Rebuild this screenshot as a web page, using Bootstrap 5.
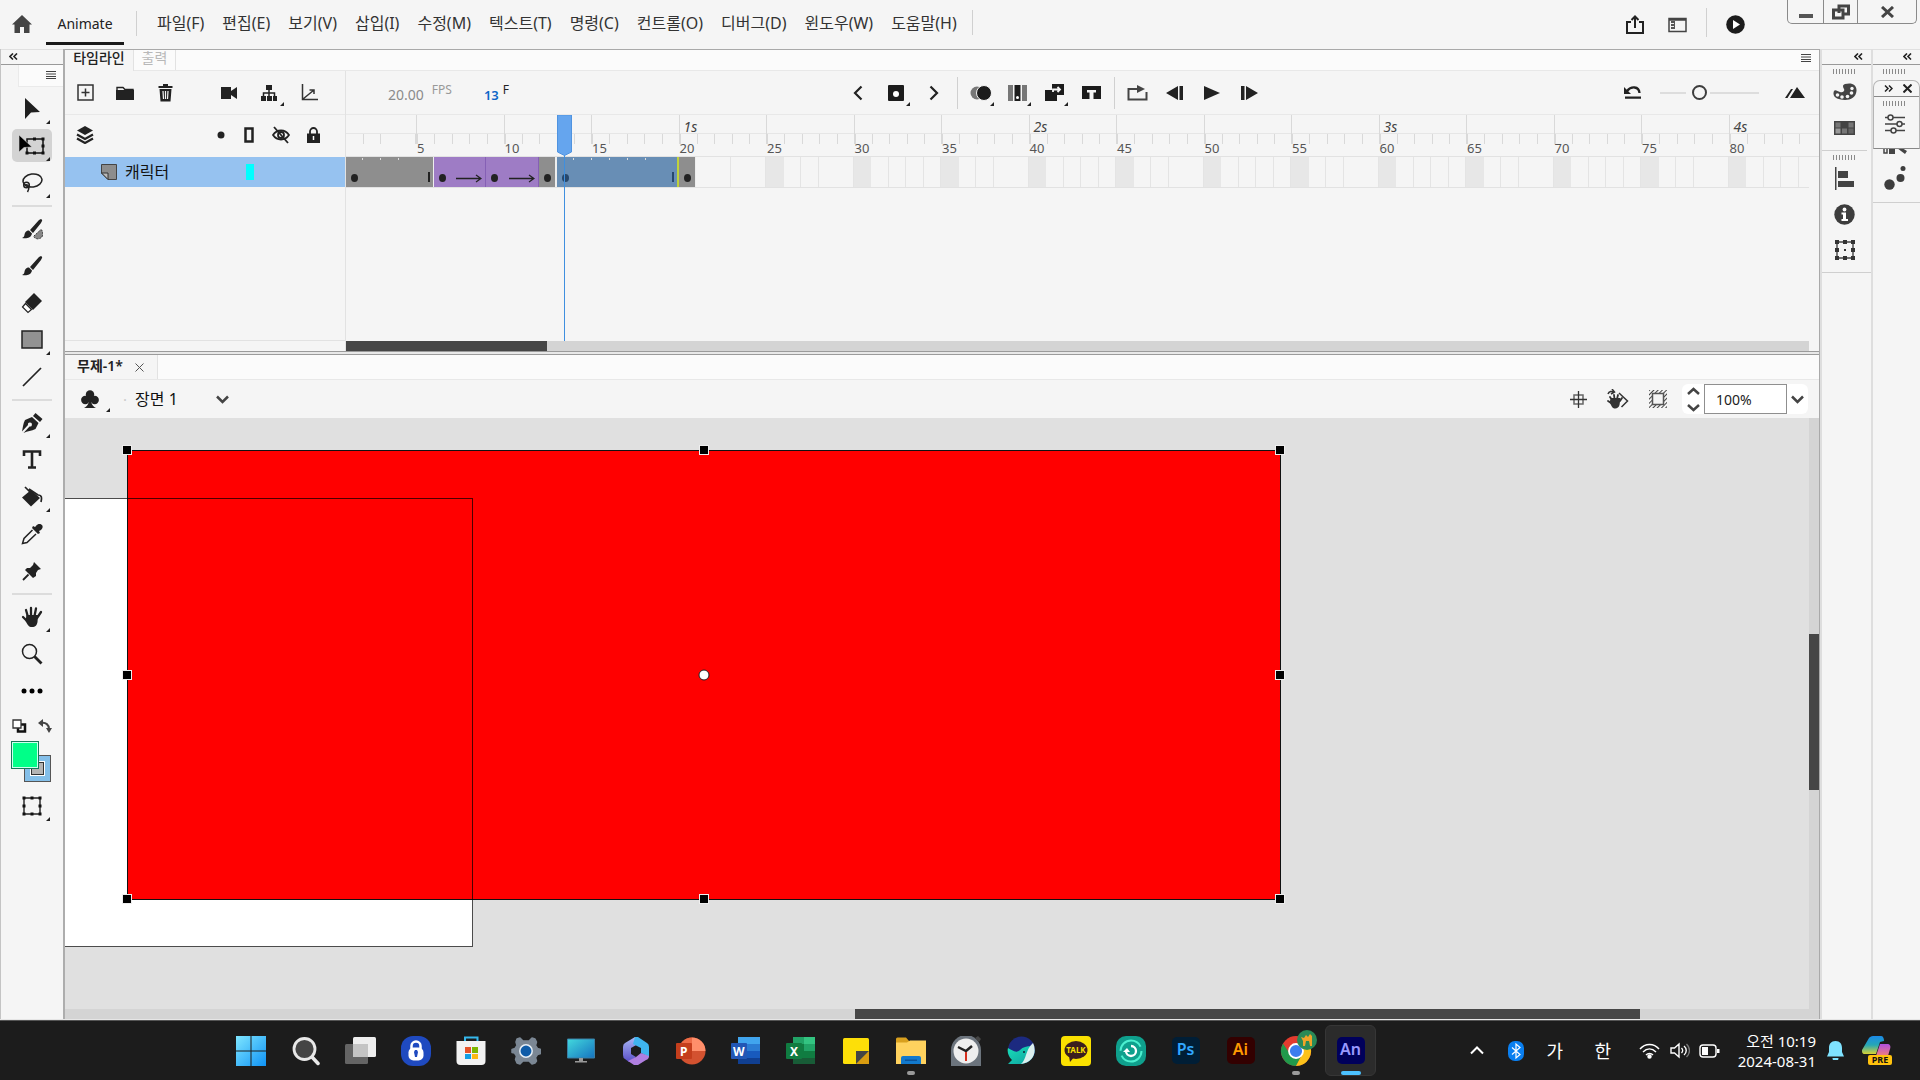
<!DOCTYPE html>
<html lang="ko">
<head>
<meta charset="utf-8">
<meta name="viewport" content="width=device-width, initial-scale=1">
<title>Animate</title>
<link href="https://cdn.jsdelivr.net/npm/bootstrap@5.3.0/dist/css/bootstrap.min.css" rel="stylesheet">
<style>
:root{--ink:#222;--panel:#f5f5f5;--line:#e2e2e2;--edge:#a9a9a9;--dark:#464646}
body{font-family:"Noto Sans","Noto Sans CJK KR",sans-serif;font-size:15px;line-height:20px;color:#333;background:var(--panel)}
button{color:var(--ink)}
svg{display:block}
.ib{border:0;background:none;padding:0;position:relative;display:flex;align-items:center;justify-content:center;flex:none}
.more::after{content:"";position:absolute;right:5px;bottom:50%;margin-bottom:-13px;border-left:4px solid transparent;border-bottom:4px solid var(--ink)}
/* application bar */
.appbar{height:49px;flex:none}
.home{width:46px;height:49px;padding-right:2px}
.brandtab{width:78px;height:45px;border-bottom:3px solid #1a1a1a;color:#222;text-decoration:none;font-size:14px;padding-top:6px}
.vsep{width:1px;height:25px;background:#d0d0d0;flex:none}
.menus{gap:18px;padding:0 15px 0 20px;list-style:none;margin:0;font-size:16px}
.menus a{color:#333;text-decoration:none;white-space:nowrap}
.winctl{height:24px;border:1px solid #8a8a8a;border-top:0;border-radius:0 0 5px 5px;margin-right:3px}
.winctl .ib{height:23px}
.winctl .ib+.ib{border-left:1px solid #8a8a8a}
/* tools */
.tools{width:65px;border-left:1px solid #c4c4c4;border-right:2px solid #adadad;flex:none}
.collapse-bar{height:16px;border-bottom:1px solid #999;border-top:1px solid #e0e0e0;padding-bottom:1px;flex:none}
.tools-head{height:22px;margin-left:17px;background:#fbfbfb;border:1px solid #eaeaea;border-top:0;border-right:0;padding:0 7px 2px 0}
.toolcol{padding-top:3px}
.tool{width:40px;height:37px}
.tool.on::before{content:"";position:absolute;inset:2px 0;background:#d3d3d3;border-radius:5px}
.tool svg{position:relative}
.tool.more::after{right:2px;margin-bottom:-15px}
.tsep{width:40px;height:2px;margin:4px 0 3px;background:#dcdcdc}
.colorops{width:40px;height:32px;padding-top:2px}
.swatches{width:42px;height:42px;position:relative}
.sw-fill,.sw-stroke{position:absolute;border:1px solid #555;padding:0}
.sw-fill{left:0;top:0;width:28px;height:28px;background:#00ff88;box-shadow:inset 0 0 0 1px #cfe;border-color:#19765a}
.sw-stroke{left:13px;top:14px;width:27px;height:27px;background:#84bfe9;display:flex;align-items:center;justify-content:center}
.sw-stroke i{width:13px;height:13px;background:#b4b4b4;border:1px solid #333;outline:1px solid #fff}
/* timeline */
.center{border-top:1px solid var(--edge);min-width:0}
.tabs-row{background:#fbfbfb;border-bottom:1px solid #e8e8e8;flex:none}
.tab-on{background:var(--panel);border:0;border-right:1px solid var(--line);color:#222;padding:0}
.tl-tabs{height:21px;font-size:14px}
.tl-tabs .tab-on{width:69px;height:21px;font-weight:500;line-height:15px;padding-bottom:6px}
.tab-off{width:42px;height:20px;border:0;border-right:1px solid var(--line);background:none;color:#b8b8b8;padding:0 0 5px;line-height:15px}
.layers{width:281px;border-right:1px solid var(--line);flex:none}
.tl-bar{height:44px;border-bottom:1px solid #e8e8e8;flex:none}
.tl-head{height:42px;flex:none;padding-bottom:2px}
.b40{width:40px;height:40px}.b38{width:38px;height:40px}.b37{width:37px;height:40px}.b32{width:32px;height:40px}
.layer-row{height:30px;background:#96c2f0;color:#111;padding-left:36px;font-size:16px}
.layer-name{width:121px;padding-left:8px}
.outline-chip{width:8px;height:16px;background:#0ff;border:0;padding:0}
.layer-foot{height:11px;border-top:1px solid var(--line)}
.fpsnum{color:#8b8b8b;font-size:14px;padding-top:5px}
.tiny{font-size:12px;line-height:16px;padding-bottom:5px}
.curframe{color:#0d66c8;font-weight:600;font-size:13px;padding-top:5px}
.zoomslide{appearance:none;width:99px;height:18px;background:linear-gradient(#ddd,#ddd) 0 8px/26px 2px no-repeat,linear-gradient(#ddd,#ddd) 50px 8px/49px 2px no-repeat;margin:0}
.zoomslide::-webkit-slider-thumb{appearance:none;width:15px;height:15px;border:2px solid #3d3d3d;border-radius:50%;background:var(--panel)}
.frames{position:relative;overflow:hidden;min-height:0}
.ruler{height:42px;border-bottom:1px solid var(--line);position:relative;overflow:hidden}
.ruler::before{content:"";position:absolute;left:0;right:0;top:18px;height:1px;background:#e6e6e6}
.lead4{width:70px;flex:none}
.block10{width:175px;flex:none}
.block10>*{flex:1 1 0;min-width:0}
.ticks{height:41px;position:relative}
.ticks::before{content:"";position:absolute;left:0;right:0;top:19px;height:10px;background:repeating-linear-gradient(90deg,#d9d9d9 0 1px,transparent 1px 20%)}
.lead4.ticks::before{background:repeating-linear-gradient(90deg,transparent 0 24%,#d9d9d9 24% 25%)}
.five{border-left:1px solid transparent}
.five::after{content:"";position:absolute;left:-1px;top:0;width:1px;height:29px;background:#d9d9d9}
.sec{position:absolute;left:4px;top:3px;line-height:18px;font-size:14px;font-style:italic;color:#444}
.num{position:absolute;left:0;top:24px;font-size:13px;line-height:18px;color:#555}
.cells{height:31px;border-bottom:1px solid var(--line);margin-right:10px}
.spans{width:350px;flex:none;display:grid;grid-template-columns:repeat(20,1fr)}
.span{position:relative;height:30px;border-right:1px solid #eee;color:#222;background:#8e8e8e}
.span.tween{background:#9e7cc5;border-right-color:#8560b5}
.span.picked{background:#688eb5;border-right:2px solid #bfd23c;border-left:1px solid #eee;color:#27486c}
.dotk{position:absolute;left:5px;bottom:5px;width:7px;height:8px;border-radius:50%;background:currentColor}
.endk{position:absolute;right:3px;bottom:5px;width:2px;height:10px;background:currentColor}
.arr{position:absolute;right:3px;bottom:4px}
.spans .notched::before{content:"";position:absolute;left:0;right:18px;top:1px;height:2px;background:repeating-linear-gradient(90deg,transparent 0 16px,#ddd 16px 17px,transparent 17px 18px)}
.empty4{background:repeating-linear-gradient(90deg,transparent 0 24%,#e4e4e4 24% 25%)}
.empty5{background:linear-gradient(90deg,#e7e7e7 20%,transparent 20%),repeating-linear-gradient(90deg,transparent 0 19%,#e4e4e4 19% 20%)}
.playhead{position:absolute;left:211px;top:0;bottom:0;width:16px;z-index:3}
.playhead::before{content:"";position:absolute;left:7px;top:40px;bottom:0;width:1px;background:#3f8fdf}
.playhead svg{position:relative}
.hbar{height:10px;background:#d4d4d4;margin-right:10px;flex:none}
.hbar div{height:10px;background:var(--dark)}
.tl-body{height:280px;flex:none}
.splitter{height:4px;border-top:1px solid #9b9b9b;border-bottom:1px solid #9b9b9b;background:#e8e8e8;flex:none}
/* document */
.doc-tabs{height:25px}
.doc-tabs .tab-on{width:93px;font-size:14px;font-weight:600;padding:0 0 3px 12px}
.scenebar{height:38px;flex:none}
.scene{appearance:none;border:0;background:transparent;width:73px;color:#111;padding:0;font-size:16px;line-height:20px}
.zoombox{background:#fff;border-radius:6px;height:30px;margin-right:11px}
.zoomin{width:83px;height:30px;border:1px solid #8f8f8f;padding:0 0 0 11px;font-size:14px;color:#222;background:#fff;border-radius:0}
.canvas-area{min-height:0}
.pasteboard{background:#e0e0e0;position:relative;overflow:hidden;min-width:0}
.stage-sheet{position:absolute;left:-10px;top:80px;width:418px;height:449px;background:#fff}
.stage-edge{position:absolute;left:-10px;top:80px;width:418px;height:449px;border:1px solid rgba(0,0,0,.7)}
.shape{position:absolute;left:62px;top:32px;width:1154px;height:450px;background:#f00;border:1px solid #111}
.handles{position:absolute;inset:-1px 0 0 -1px}
.hd{position:absolute;width:10px;height:10px;background:#000;border:1px solid #eee;transform:translate(-50%,-50%)}
.pivot{position:absolute;left:50%;top:50%;width:11px;height:11px;border-radius:50%;background:#fff;border:1px solid #222;transform:translate(-50%,-50%)}
.vbar{width:10px;background:#d4d4d4;flex:none;padding-top:216px}
.vbar div{height:156px;background:var(--dark)}
/* docks */
.docks{flex:none;border-left:1px solid #a9a9a9;width:101px}
.dock{width:51px;position:relative;border-left:2px solid #dedede}
.dock+.dock{width:49px}
.grip{width:24px;height:5px;background:repeating-linear-gradient(90deg,#8a8a8a 0 1px,transparent 1px 3px);flex:none}
.dbtn{width:40px;height:36px;color:#444}
.dline{align-self:stretch;height:1px;background:#cfcfcf}
.undercover{height:74px}
.flyout{position:absolute;left:0;right:0;top:31px;height:69px;background:var(--panel);border:1px solid #b5b5b5;border-bottom-color:#888;border-radius:7px 7px 0 0;z-index:2}
.fly-head{height:16px;border-bottom:1px solid #888;padding:0 7px 0 10px}
/* taskbar */
.workspace{min-height:0;border-bottom:1px solid #e6e6e6}
.taskbar{height:60px;background:#1c1c1c;border-top:1px solid #555;flex:none;color:#fff;padding-left:223px}
.app{width:55px;height:59px}
.app.run::after{content:"";position:absolute;bottom:5px;width:8px;height:4px;border-radius:2px;background:#9a9a9a}
.app.active::before{content:"";position:absolute;inset:4px 2px;border-radius:6px;background:#2b2b2b;border:1px solid #363636}
.app.active::after{width:20px;background:#4cc2ff}
.app svg,.adobe{position:relative}
.adobe{width:28px;height:27px;border-radius:5px;font-size:16px;line-height:25px;font-weight:600}
.ps{background:#001e36;color:#31a8ff}.ai{background:#330000;color:#ff9a00}.an{background:#00005b;color:#9999ff}
.tray{padding-right:28px}
.tray .ib{height:59px;color:#fff}
.ime{width:48px;font-size:18px}
.clock{font-size:15px;line-height:20px;text-align:right;margin-left:13px;white-space:nowrap}
</style>
<script src="https://cdn.jsdelivr.net/npm/bootstrap@5.3.0/dist/js/bootstrap.bundle.min.js"></script>
</head>
<body class="vh-100 d-flex flex-column overflow-hidden">

<header class="appbar d-flex">
  <button class="ib home" aria-label="홈"><svg width="20" height="19" viewBox="0 0 20 19"><path fill="#444" d="M10 0 20 9.500h-2.500V18h-5.500v-6h-4v6H2.500V9.500H0L10 0z"/></svg></button>
  <a class="brandtab d-flex align-items-center justify-content-center" href="#">Animate</a>
  <div class="d-flex align-items-center ps-2 ms-1" style="height:46px"><span class="vsep"></span></div>
  <nav class="d-flex align-items-center" style="height:45px">
    <ul class="menus d-flex">
      <li><a href="#">파일(F)</a></li><li><a href="#">편집(E)</a></li><li><a href="#">보기(V)</a></li><li><a href="#">삽입(I)</a></li><li><a href="#">수정(M)</a></li><li><a href="#">텍스트(T)</a></li><li><a href="#">명령(C)</a></li><li><a href="#">컨트롤(O)</a></li><li><a href="#">디버그(D)</a></li><li><a href="#">윈도우(W)</a></li><li><a href="#">도움말(H)</a></li>
    </ul>
    <span class="vsep"></span>
  </nav>
  <div class="d-flex ms-auto">
    <div class="d-flex align-items-center me-4">
      <button class="ib" style="width:42px" aria-label="공유"><svg width="20" height="20" viewBox="0 0 20 20" fill="none" stroke="#222" stroke-width="2"><path d="M6 7H2v11h16V7h-4M10 13V2M6.500 5 10 1.500 13.500 5"/></svg></button>
      <button class="ib" style="width:42px" aria-label="작업 영역"><svg width="19" height="16" viewBox="0 0 19 16"><path fill="none" stroke="#444" stroke-width="1.500" d="M1 1.500h17v13H1zM1 3h17"/><path fill="#555" d="M3 4h4v8H3z"/><path stroke="#eee" d="M3 6.500h3M3 9.500h3"/></svg></button>
      <span class="vsep mx-2 mb-1" style="height:29px"></span>
      <button class="ib" style="width:40px" aria-label="테스트"><svg width="19" height="19" viewBox="0 0 19 19"><circle cx="9.500" cy="9.500" r="9.300" fill="#1c1c1c"/><path fill="#fff" d="M7 5l7 4.500L7 14z"/></svg></button>
    </div>
    <div class="winctl d-flex ms-2">
      <button class="ib" style="width:35px" aria-label="최소화"><svg width="14" height="16"><path fill="#555" d="M0 10h14v4H0z"/></svg></button>
      <button class="ib" style="width:34px" aria-label="복원"><svg width="18" height="16" viewBox="0 0 18 16" fill="none" stroke="#444" stroke-width="3"><path d="M7 9V2h9.500v8H11"/><path d="M1.500 6H11v8H1.500z"/></svg></button>
      <button class="ib" style="width:59px" aria-label="닫기"><svg width="13" height="12" viewBox="0 0 13 12" stroke="#444" stroke-width="3"><path d="M1 1l11 10M12 1L1 11"/></svg></button>
    </div>
  </div>
</header>

<main class="workspace d-flex flex-fill">
  <aside class="tools d-flex flex-column">
    <div class="collapse-bar d-flex align-items-center ps-2"><button class="ib" aria-label="접기"><svg width="9" height="7" viewBox="0 0 9 7" fill="none" stroke="#222" stroke-width="1.600"><path d="M4 .5 1 3.500l3 3M8 .5 5 3.500l3 3"/></svg></button></div>
    <div class="tools-head d-flex align-items-center justify-content-end"><button class="ib" aria-label="패널 메뉴"><svg width="10" height="8" stroke="#444"><path d="M0 .5h10M0 3h10M0 5.500h10M0 7.500h10"/></svg></button></div>
    <div class="toolcol d-flex flex-column align-items-center">
      <button class="ib tool more" aria-label="선택"><svg width="22" height="24" viewBox="0 0 22 24"><path fill="#1f1f1f" d="M4 1v21l6-6.500 9-.5z"/></svg></button>
      <button class="ib tool more on" aria-label="자유 변형"><svg width="26" height="24" viewBox="0 0 26 24"><path fill="none" stroke="#111" stroke-width="1.500" d="M8 5h16v14H8z"/><path fill="#111" d="M14 3.500h3v3h-3zM22.500 3.500h3v3h-3zM22.500 10.500h3v3h-3zM22.500 17.500h3v3h-3zM14 17.500h3v3h-3zM6.500 17.500h3v3h-3z"/><path fill="#000" stroke="#d3d3d3" stroke-width=".6" d="M0 1v17l5-4.500 8-.5z"/></svg></button>
      <button class="ib tool more" aria-label="올가미"><svg width="22" height="22" viewBox="0 0 22 22" fill="none" stroke="#222" stroke-width="1.500"><ellipse cx="11.500" cy="8.500" rx="9.500" ry="6.500" transform="rotate(-8 11.500 8.500)"/><circle cx="5.500" cy="13" r="2.800"/><path d="M4 13c4-1 5 3 2.500 7"/></svg></button>
      <div class="tsep"></div>
      <button class="ib tool" aria-label="유동 브러시"><svg width="22" height="22" viewBox="0 0 22 22"><path fill="#222" d="M20 1c2 1 1 2 0 4l-8 10-3-3 9-10z"/><path fill="#222" d="M8 12.500l3 3c-1 5-6 5-10 4.500 3-1 2-3 3-5s2.500-2.500 4-2.500z"/><path fill="#888" stroke="#333" stroke-dasharray="2 1" d="M20 11.500a5.200 5.200 0 1 1-7.500 7z"/></svg></button>
      <button class="ib tool" aria-label="브러시"><svg width="22" height="22" viewBox="0 0 22 22"><path fill="#222" d="M20 1c2 1 1 2 0 4l-8 10-3-3 9-10z"/><path fill="#222" d="M8 12.500l3 3c-1 5-6 5-10 4.500 3-1 2-3 3-5s2.500-2.500 4-2.500z"/></svg></button>
      <button class="ib tool" aria-label="지우개"><svg width="22" height="22" viewBox="0 0 22 22"><path fill="#222" d="M13 1l8 8-9 9-8-8z"/><path fill="#fff" stroke="#222" stroke-width="1.200" d="M4.500 11.500l6 6-3.500 3-5.500-5.500z"/></svg></button>
      <button class="ib tool more" aria-label="사각형"><svg width="22" height="20"><path fill="#929292" stroke="#222" stroke-width="1.500" d="M1 1h20v17H1z"/></svg></button>
      <button class="ib tool" aria-label="선"><svg width="20" height="20"><path stroke="#222" stroke-width="1.700" d="M1 19 19 1"/></svg></button>
      <div class="tsep"></div>
      <button class="ib tool more" aria-label="펜"><svg width="22" height="22" viewBox="0 0 22 22"><path fill="#222" d="M14.500 1l7 6-2.500 3-7-6zM11 5l6.500 6-3 6c-4 2-8 2-12 4l6-6.500a2 2 0 1 0-1.500-1.500L1 19.500C2 15 2 12 4 8z"/></svg></button>
      <button class="ib tool" aria-label="텍스트"><svg width="20" height="19" viewBox="0 0 20 19" fill="none" stroke="#222" stroke-width="2.600"><path d="M2 6V1.500h16V6M10 2v15M6 17.500h8"/></svg></button>
      <button class="ib tool more" aria-label="페인트 통"><svg width="22" height="22" viewBox="0 0 22 22"><path fill="#222" d="M10 4l9 8-9 8.500-9-9z"/><path fill="none" stroke="#222" stroke-width="1.700" d="M4 1l8 8M8 3l9 6c4 0 4 3 3 7"/></svg></button>
      <button class="ib tool" aria-label="스포이드"><svg width="22" height="22" viewBox="0 0 22 22"><path fill="#222" d="M15 3c2-3 5-2 6-1s1 3-1 5l-2 1 1 2-2 1-6-6 1-2 2 1z"/><path fill="none" stroke="#222" stroke-width="1.500" d="M11.500 7 3 15.500 1.500 20.500l4.500-1L15 11"/></svg></button>
      <button class="ib tool" aria-label="에셋 변형"><svg width="20" height="20" viewBox="0 0 20 20"><path fill="#222" d="M12 1l7 7-3 1-2 3v3l-3 2-8-8 2-2h3l3-3z"/><path stroke="#222" stroke-width="1.800" d="M6.500 13.500 1 19"/></svg></button>
      <div class="tsep"></div>
      <button class="ib tool more" aria-label="손"><svg width="22" height="22" viewBox="0 0 22 22"><g stroke="#222" stroke-width="2.300" stroke-linecap="round"><path d="M7 11 5 4M10 10V2M13.500 10 15 2.500M16 12l4-6M6 15l-4-4"/></g><path fill="#222" d="M5.500 9 17 9l-.5 7c-.5 3-2 5-5.500 5s-4-2-6.500-6z"/></svg></button>
      <button class="ib tool" aria-label="확대/축소"><svg width="22" height="22" viewBox="0 0 22 22" fill="none" stroke="#222"><circle cx="8.500" cy="8.500" r="7" stroke-width="1.500"/><path stroke-width="2.800" d="M13.500 13.500l7 7"/></svg></button>
      <button class="ib tool" aria-label="더 보기"><svg width="22" height="6"><circle cx="3" cy="3" r="2.500"/><circle cx="11" cy="3" r="2.500"/><circle cx="19" cy="3" r="2.500"/></svg></button>
      <div class="colorops d-flex justify-content-between align-items-center">
        <button class="ib" aria-label="기본색"><svg width="15" height="14" viewBox="0 0 15 14"><path fill="none" stroke="#111" stroke-width="2.500" d="M6 5.500h7v7H6z"/><path fill="#fff" stroke="#333" stroke-width="1.300" d="M1 1h8v8H1z"/></svg></button>
        <button class="ib" aria-label="색 교체"><svg width="14" height="14" viewBox="0 0 14 14"><path fill="none" stroke="#444" stroke-width="2" d="M3 4c5-1 8 2 8 6"/><path fill="#444" d="M5 0v8L0 4zM8 9h6l-3 5z"/></svg></button>
      </div>
      <div class="swatches"><button class="sw-stroke" aria-label="획 색"><i></i></button><button class="sw-fill" aria-label="칠 색"></button></div>
      <button class="ib tool more mt-1" aria-label="변형 옵션"><svg width="20" height="20" viewBox="0 0 20 20"><path fill="none" stroke="#222" stroke-width="1.400" d="M2 2h16v16H2z"/><path fill="#111" d="M.5.500h3v3h-3zM8.500.500h3v3h-3zM16.500.500h3v3h-3zM.5 8.500h3v3h-3zM16.500 8.500h3v3h-3zM.5 16.500h3v3h-3zM8.500 16.500h3v3h-3zM16.500 16.500h3v3h-3z"/></svg></button>
    </div>
  </aside>

  <section class="center d-flex flex-column flex-fill">
    <div class="tabs-row tl-tabs d-flex">
      <button class="tab-on">타임라인</button><button class="tab-off">출력</button>
      <button class="ib ms-auto me-2 pb-1" aria-label="패널 메뉴"><svg width="10" height="8" stroke="#444"><path d="M0 .5h10M0 3h10M0 5.500h10M0 7.500h10"/></svg></button>
    </div>
    <div class="tl-body d-flex">
      <div class="layers d-flex flex-column">
        <div class="tl-bar d-flex align-items-center">
          <button class="ib b40" aria-label="새 레이어"><svg width="17" height="17" fill="none" stroke="#333" stroke-width="1.500"><path d="M1 1h15v15H1zM8.500 4.500v8M4.500 8.500h8"/></svg></button>
          <button class="ib b40" aria-label="새 폴더"><svg width="18" height="16"><path fill="#222" d="M0 5h18v10H0z"/><path fill="none" stroke="#222" stroke-width="1.400" d="M1 6V2.500h6l2 2h8V7"/></svg></button>
          <button class="ib b40 me-4" aria-label="삭제"><svg width="15" height="18" viewBox="0 0 15 18"><path fill="#222" d="M5 0h5v2h4.500v2H.5V2H5zM1.500 5h12l-1 12.500h-10z"/><path stroke="#f5f5f5" stroke-width="1.200" d="M5 7l.5 8M10 7l-.5 8M7.500 7v8"/></svg></button>
          <button class="ib b40" aria-label="카메라"><svg width="16" height="12"><path fill="#222" d="M0 0h10v4l6-4v12l-6-4v4H0z"/></svg></button>
          <button class="ib b40 more" aria-label="상위 보기"><svg width="16" height="16"><path fill="#222" d="M5 0h6v5H5zM0 11h5v5H0zM6 11h5v5H6zM12 11h4v5h-4z"/><path fill="none" stroke="#222" stroke-width="1.500" d="M8 4v7M2.500 12V8h11v4"/></svg></button>
          <button class="ib b40" aria-label="그래프"><svg width="17" height="17" viewBox="0 0 17 17" fill="none" stroke="#333" stroke-width="1.500"><path d="M1.500 0v15.500H17M2 15 13 6M8.500 6H13v4"/></svg></button>
        </div>
        <div class="tl-head d-flex align-items-center">
          <button class="ib b40" aria-label="레이어 깊이"><svg width="18" height="18" viewBox="0 0 18 18"><path fill="#222" d="M9 0l8 4.500L9 9 1 4.500z"/><path fill="none" stroke="#222" stroke-width="2.200" d="M1 8.500 9 13l8-4.500M1 12.500 9 17l8-4.500"/></svg></button>
          <div class="d-flex ms-auto me-3">
            <button class="ib b32 ps-2" aria-label="강조"><svg width="8" height="8"><circle cx="4" cy="4" r="3.500" fill="#222"/></svg></button>
            <button class="ib b32" aria-label="윤곽선"><svg width="10" height="16"><path fill="none" stroke="#222" stroke-width="2.500" d="M1.500 1.500h7v13h-7z"/></svg></button>
            <button class="ib b32" aria-label="숨기기"><svg width="18" height="18" viewBox="0 0 18 18" fill="none" stroke="#222" stroke-width="1.800"><path d="M1 9c4-6 12-6 16 0-4 6-12 6-16 0z"/><circle cx="9" cy="9" r="3"/><path d="M2 1l14 16"/></svg></button>
            <button class="ib b32" aria-label="잠그기"><svg width="13" height="16"><path fill="none" stroke="#222" stroke-width="1.800" d="M3 7V4.500a3.500 3.500 0 0 1 7 0V7"/><path fill="#222" d="M0 6.500h13V16H0z"/><path stroke="#fff" stroke-width="1.500" d="M6.500 9v4"/></svg></button>
          </div>
        </div>
        <div class="layer-row d-flex align-items-center">
          <svg width="16" height="16"><path fill="#8d8d8d" stroke="#444" d="M.5.5h15v15H7L.5 9z"/><path fill="#bbb" stroke="#333" d="M.5 9H7v6.500z"/></svg>
          <span class="layer-name">캐릭터</span>
          <button class="outline-chip ms-2" aria-label="윤곽선 색"></button>
        </div>
        <div class="layer-foot mt-auto"></div>
      </div>
      <div class="d-flex flex-column flex-fill" style="min-width:0">
        <div class="tl-bar d-flex align-items-center">
          <div class="d-flex align-items-center" style="width:493px;padding-left:42px">
            <span class="fpsnum">20.00</span><span class="tiny ms-2" style="color:#999">FPS</span>
            <span class="curframe ms-4 ps-2">13</span><span class="tiny ms-1" style="color:#222">F</span>
          </div>
          <button class="ib b38" aria-label="이전 키프레임"><svg width="10" height="16" fill="none" stroke="#222" stroke-width="2.200"><path d="M8.500 1.500 2 8l6.500 6.500"/></svg></button>
          <button class="ib b38 more" aria-label="키프레임 삽입"><svg width="16" height="16"><rect width="16" height="16" rx="1" fill="#1c1c1c"/><circle cx="8" cy="9" r="3" fill="#fff"/></svg></button>
          <button class="ib b38" aria-label="다음 키프레임"><svg width="10" height="16" fill="none" stroke="#222" stroke-width="2.200"><path d="M1.500 1.500 8 8l-6.500 6.500"/></svg></button>
          <span class="vsep mx-1" style="height:32px"></span>
          <button class="ib b37 more" aria-label="어니언 스킨"><svg width="22" height="16"><circle cx="7" cy="8" r="6.500" fill="#777"/><circle cx="14" cy="8" r="7.500" fill="#1c1c1c" stroke="#f5f5f5"/></svg></button>
          <button class="ib b37 more" aria-label="여러 프레임 편집"><svg width="19" height="16"><path fill="#777" d="M0 0h5v16H0zM14 0h5v16h-5z"/><path fill="#1c1c1c" d="M6.500 0h6v16h-6z"/><circle cx="9.500" cy="12.500" r="1.500" fill="#fff"/></svg></button>
          <button class="ib b37 more" aria-label="트윈 만들기"><svg width="19" height="17"><path fill="#1c1c1c" d="M0 6h12v11H0zM7 0h12v11H7z"/><path fill="none" stroke="#f5f5f5" stroke-width="1.800" d="M8 8V5.500h7M12.500 3 15 5.500 12.500 8"/></svg></button>
          <button class="ib b37" aria-label="프레임 분할"><svg width="19" height="13"><path fill="#1c1c1c" d="M0 0h19v13h-7.500V6.500H14V4H5v2.500h2.500V13H0z"/></svg></button>
          <span class="vsep mx-1" style="height:32px"></span>
          <button class="ib b37" aria-label="루프"><svg width="21" height="16" fill="none" stroke="#444" stroke-width="2"><path d="M6 4H1.500v10.500h18V7M6 4h8"/><path fill="#444" stroke="none" d="M10 0l8 4-8 4z"/></svg></button>
          <button class="ib b37" aria-label="뒤로"><svg width="18" height="14"><path fill="#222" d="M12 0v14L0 7zM13.500 0h3.500v14h-3.500z"/></svg></button>
          <button class="ib b37" aria-label="재생"><svg width="16" height="14"><path fill="#222" d="M0 0l16 7-16 7z"/></svg></button>
          <button class="ib b37" aria-label="앞으로"><svg width="18" height="14"><path fill="#222" d="M6 0v14l12-7zM1 0h3.500v14H1z"/></svg></button>
          <div class="d-flex align-items-center ms-auto me-1">
            <button class="ib b40 me-2" aria-label="확대 재설정"><svg width="17" height="13" viewBox="0 0 17 13"><path fill="none" stroke="#222" stroke-width="2.300" d="M3 5c4-5 12-5 12.500 2M1 11.700h16"/><path fill="#222" d="M0 1v7h7z"/></svg></button>
            <input class="zoomslide" type="range" min="0" max="100" value="38" aria-label="타임라인 확대">
            <button class="ib b40 ms-3" aria-label="프레임 확대"><svg width="20" height="11"><path fill="#222" d="M5 11 12 0l8 11zM0 11h2.500L8 2H6z"/></svg></button>
          </div>
        </div>
        <div class="frames flex-fill">
          <div class="ruler d-flex" id="ruler"><div class="lead4 ticks"></div></div>
          <div class="cells d-flex overflow-hidden" id="cells">
            <div class="spans">
              <div class="span notched" style="grid-column:span 5"><i class="dotk"></i><i class="endk"></i></div>
              <div class="span tween" style="grid-column:span 3"><i class="dotk"></i><svg class="arr" width="26" height="9" fill="none" stroke="#222" stroke-width="1.300"><path d="M0 4.500h25M20 1l5 3.500L20 8"/></svg></div>
              <div class="span tween" style="grid-column:span 3"><i class="dotk"></i><svg class="arr" width="26" height="9" fill="none" stroke="#222" stroke-width="1.300"><path d="M0 4.500h25M20 1l5 3.500L20 8"/></svg></div>
              <div class="span"><i class="dotk"></i></div>
              <div class="span picked notched" style="grid-column:span 7"><i class="dotk"></i><i class="endk"></i></div>
              <div class="span"><i class="dotk"></i></div>
            </div>
            <div class="lead4 empty4"></div>
          </div>
          <div class="playhead"><svg width="16" height="41"><path fill="#65a5ee" stroke="#4f93e0" d="M.5 0h14v37l-7 3.500-7-3.500z"/></svg></div>
        </div>
        <div class="hbar"><div style="width:201px"></div></div>
      </div>
    </div>
    <div class="splitter"></div>
    <div class="tabs-row doc-tabs d-flex">
      <div class="tab-on d-flex align-items-center"><span>무제-1*</span><button class="ib ms-2 ps-1 pt-1" aria-label="문서 닫기"><svg width="9" height="9" stroke="#555"><path d="M.5.5l8 8M8.500.5l-8 8"/></svg></button></div>
    </div>
    <div class="scenebar d-flex align-items-center">
      <button class="ib more" style="width:50px;height:38px" aria-label="심볼 편집"><svg width="18" height="18" viewBox="0 0 18 18" fill="#222"><circle cx="9" cy="4.500" r="4.200"/><circle cx="4.300" cy="10" r="4.200"/><circle cx="13.700" cy="10" r="4.200"/><path d="M8 8h2c0 5 1 8 5 10H3c4-2 5-5 5-10z"/></svg></button>
      <span class="px-2" style="color:#ccc">·</span>
      <select class="scene" aria-label="장면"><option>장면 1</option></select>
      <svg class="ms-2" width="13" height="9" fill="none" stroke="#444" stroke-width="2.500"><path d="M1 1.500l5.500 5.500L12 1.500"/></svg>
      <div class="d-flex align-items-center ms-auto">
        <button class="ib b40" aria-label="스테이지 중앙"><svg width="17" height="17" fill="none" stroke="#333"><path stroke="#666" stroke-width="1.500" d="M4 4h9v9H4z"/><path stroke-width="1.300" d="M8.500 0v17M0 8.500h17"/></svg></button>
        <button class="ib b40" aria-label="회전 도구"><svg width="22" height="21" viewBox="0 0 22 21"><g stroke="#333" stroke-width="1.800" stroke-linecap="round"><path d="M5 11 3 8M7.500 10 7 6M10 10l1-4M13 12l2-3M4 14l-3-2"/></g><path fill="#333" d="M4 9h9.500l-1 7c-1 4-6 5-8 1l-2-4z"/><path fill="none" stroke="#333" stroke-width="1.500" d="M12 4l8.500 8-6 6M1 5c1-3 4-3 6-2M5 0l2.500 3L4 5"/></svg></button>
        <button class="ib b40" aria-label="스테이지 밖 자르기"><svg width="18" height="18"><defs><pattern id="hatch" width="3" height="3" patternUnits="userSpaceOnUse" patternTransform="rotate(45)"><path stroke="#444" stroke-width="2" d="M0 0v3"/></pattern></defs><path fill="url(#hatch)" d="M0 0h18v18H0z"/><path fill="#f5f5f5" stroke="#555" stroke-width="1.500" d="M3.500 3.500h11v11h-11z"/></svg></button>
        <div class="zoombox d-flex align-items-center ms-1">
          <div class="d-flex flex-column justify-content-between" style="width:22px;height:25px">
            <button class="ib" aria-label="확대"><svg width="13" height="8" fill="none" stroke="#444" stroke-width="2.500"><path d="M1 7l5.500-5L12 7"/></svg></button>
            <button class="ib" aria-label="축소"><svg width="13" height="8" fill="none" stroke="#444" stroke-width="2.500"><path d="M1 1l5.500 5L12 1"/></svg></button>
          </div>
          <input class="zoomin" type="text" value="100%" aria-label="배율">
          <button class="ib" style="width:21px" aria-label="배율 목록"><svg width="13" height="9" fill="none" stroke="#444" stroke-width="2.500"><path d="M1 1.500l5.500 5.500L12 1.500"/></svg></button>
        </div>
      </div>
    </div>
    <div class="canvas-area d-flex flex-fill">
      <div class="d-flex flex-column flex-fill" style="min-width:0">
        <div class="pasteboard flex-fill">
          <div class="stage-sheet"></div>
          <div class="shape"><div class="handles">
            <i class="hd" style="left:0;top:0"></i><i class="hd" style="left:50%;top:0"></i><i class="hd" style="left:100%;top:0"></i>
            <i class="hd" style="left:0;top:50%"></i><i class="pivot"></i><i class="hd" style="left:100%;top:50%"></i>
            <i class="hd" style="left:0;top:100%"></i><i class="hd" style="left:50%;top:100%"></i><i class="hd" style="left:100%;top:100%"></i>
          </div></div>
          <div class="stage-edge"></div>
        </div>
        <div class="hbar me-0"><div style="width:45%;margin-left:790px"></div></div>
      </div>
      <div class="vbar"><div></div></div>
    </div>
  </section>

  <aside class="docks d-flex">
    <div class="dock">
      <div class="collapse-bar d-flex align-items-center justify-content-end pe-2"><button class="ib" aria-label="패널 확장"><svg width="9" height="7" viewBox="0 0 9 7" fill="none" stroke="#222" stroke-width="1.600"><path d="M4 .5 1 3.500l3 3M8 .5 5 3.500l3 3"/></svg></button></div>
      <div class="d-flex flex-column align-items-center pt-1 pe-1">
        <div class="grip"></div>
        <button class="ib dbtn" aria-label="색상"><svg width="24" height="18" viewBox="0 0 24 18"><path fill="#444" d="M12 1c7-2 12 1 11.500 7S18 17 12 17 0 15 .5 10 4 8 7 9s5-1 4-3-2-4 1-5z"/><g fill="#f5f5f5"><circle cx="4.500" cy="12" r="1.800"/><circle cx="9" cy="14" r="1.800"/><circle cx="14.500" cy="13.500" r="1.800"/><circle cx="18.500" cy="10" r="1.800"/><circle cx="19" cy="5.500" r="1.700"/></g></svg></button>
        <button class="ib dbtn" aria-label="견본"><svg width="21" height="14"><path fill="#444" d="M0 0h21v14H0z"/><path fill="#777" d="M1.500 1.500h5v5h-5zM14.500 1.500h5v5h-5zM8 7.500h5v5H8z"/><path fill="#999" d="M1.500 7.500h5v5h-5z"/><path fill="#666" d="M14.500 7.500h5v5h-5z"/></svg></button>
        <div class="dline my-1"></div>
        <div class="grip"></div>
        <button class="ib dbtn" aria-label="정렬"><svg width="20" height="23"><path fill="#444" d="M0 0h1.500v23H0zM3 4h10v7H3zM3 14h16v6H3z"/></svg></button>
        <button class="ib dbtn" aria-label="정보"><svg width="21" height="21"><circle cx="10.500" cy="10.500" r="10.200" fill="#3d3d3d"/><circle cx="10.500" cy="5.500" r="1.900" fill="#fff"/><path fill="#fff" d="M7.500 8.500H12V15h2v2H7.500v-2H9v-4.500H7.500z"/></svg></button>
        <button class="ib dbtn" aria-label="변형"><svg width="20" height="20" viewBox="0 0 20 20"><path fill="none" stroke="#444" stroke-width="1.400" d="M2 2h16v16H2z"/><path fill="#333" d="M0 0h4v4H0zM8 0h4v4H8zM16 0h4v4h-4zM0 8h4v4H0zM16 8h4v4h-4zM0 16h4v4H0zM8 16h4v4H8zM16 16h4v4h-4zM9 9h2v2H9z"/></svg></button>
      </div>
      <div class="dline mt-1"></div>
    </div>
    <div class="dock">
      <div class="collapse-bar d-flex align-items-center justify-content-end pe-2"><button class="ib" aria-label="패널 확장"><svg width="9" height="7" viewBox="0 0 9 7" fill="none" stroke="#222" stroke-width="1.600"><path d="M4 .5 1 3.500l3 3M8 .5 5 3.500l3 3"/></svg></button></div>
      <div class="d-flex flex-column align-items-center pt-1 pe-1">
        <div class="grip"></div>
        <div class="undercover"></div>
        <button class="ib" aria-label="에셋"><svg width="24" height="6"><path fill="#444" d="M6 0h6v6H6zM14 0h5l5 3-2 3z"/><path fill="none" stroke="#444" stroke-width="1.500" d="M1 0v5h3V0"/></svg></button>
        <button class="ib dbtn" style="height:48px" aria-label="브러시 라이브러리"><svg width="22" height="24"><g fill="#3d3d3d"><circle cx="5.500" cy="18.500" r="5.200"/><circle cx="16.500" cy="12" r="4"/><circle cx="19" cy="2.500" r="2.500"/></g></svg></button>
      </div>
      <div class="dline"></div>
      <div class="flyout">
        <div class="fly-head d-flex align-items-center justify-content-between">
          <button class="ib" aria-label="접기"><svg width="9" height="7" viewBox="0 0 9 7" fill="none" stroke="#222" stroke-width="1.500"><path d="M1 .5l3 3-3 3M5 .5l3 3-3 3"/></svg></button>
          <button class="ib" aria-label="닫기"><svg width="9" height="9" stroke="#222" stroke-width="2"><path d="M.5.5l8 8M8.500.5l-8 8"/></svg></button>
        </div>
        <div class="d-flex flex-column align-items-center pt-1 pe-1"><div class="grip"></div>
          <button class="ib dbtn" aria-label="속성"><svg width="20" height="20" fill="#f5f5f5" stroke="#444" stroke-width="1.500"><path d="M0 3.500h20M0 10h20M0 16.500h20"/><circle cx="5.500" cy="3.500" r="2.500"/><circle cx="14.500" cy="10" r="2.500"/><circle cx="8.500" cy="16.500" r="2.500"/></svg></button>
        </div>
      </div>
    </div>
  </aside>
</main>

<footer class="taskbar d-flex">
  <button class="ib app" aria-label="시작"><svg width="30" height="30"><defs><linearGradient id="gw" x2="1" y2="1"><stop stop-color="#7fe6ff"/><stop offset="1" stop-color="#0f93f5"/></linearGradient></defs><path fill="url(#gw)" d="M0 0h14.500v14.500H0zM15.500 0H30v14.500H15.500zM0 15.500h14.500V30H0zM15.500 15.500H30V30H15.500z"/></svg></button>
  <button class="ib app" aria-label="검색"><svg width="28" height="30" fill="none" stroke="#e8e8e8"><circle cx="12.500" cy="13" r="10.500" fill="#444" stroke-width="2.800"/><path stroke-width="3.500" stroke-linecap="round" d="M20 21l6 6.500"/></svg></button>
  <button class="ib app" aria-label="작업 보기"><svg width="31" height="30"><rect x="8" y="1" width="23" height="20" rx="1.500" fill="#eee"/><rect y="8" width="23" height="20" rx="1.500" fill="#777" opacity=".8"/><path fill="#c4c4c4" d="M8 8h15v13H8z"/></svg></button>
  <button class="ib app" aria-label="보안"><svg width="30" height="30"><rect width="30" height="30" rx="12" fill="#1f4ac0"/><path fill="none" stroke="#fff" stroke-width="2.500" d="M10.500 13V10a4.500 4.500 0 0 1 9 0v3"/><rect x="7.500" y="11.500" width="15" height="13" rx="5" fill="#fff"/><path fill="#1f4ac0" d="M14 14h2l1 2-1 5h-2l-1-5z"/></svg></button>
  <button class="ib app" aria-label="스토어"><svg width="30" height="30"><path fill="none" stroke="#35b8ec" stroke-width="2" d="M9 7V1.500h12.500V7"/><path fill="#f2f2f2" d="M.5 5h29v20a4 4 0 0 1-4 4h-21a4 4 0 0 1-4-4z"/><path fill="#e5532a" d="M9 11h6v6H9z"/><path fill="#7db700" d="M16 11h6v6h-6z"/><path fill="#119fe5" d="M9 18h6v5H9z"/><path fill="#fdb913" d="M16 18h6v5h-6z"/></svg></button>
  <button class="ib app" aria-label="설정"><svg width="30" height="30" viewBox="0 0 30 30"><path fill="#7b8794" stroke="#7b8794" stroke-width="1.500" stroke-linejoin="round" d="M6 3l3-1 3 3h6l3-3 3 1 1.500 3-1 3.500 2 3 3.500 1v4l-3.500 1-2 3 1 3.500L24 27l-3 1-3-3h-6l-3 3-3-1-1.500-3.500 1-3.500-2-3L1 16.500v-3l3-1 2-3-1-3.500z"/><circle cx="15" cy="15" r="6.200" fill="#0f5ca8" stroke="#e6eef5" stroke-width="1.500"/></svg></button>
  <button class="ib app" aria-label="내 PC"><svg width="28" height="26"><defs><linearGradient id="gm" x2="1" y2="1"><stop stop-color="#42d9dd"/><stop offset="1" stop-color="#1673c0"/></linearGradient></defs><path fill="url(#gm)" stroke="#3a7fa5" d="M.5 1h27v19h-27z"/><path fill="#999" d="M12 20h4v3h4v1.500H8V23h4z"/></svg></button>
  <button class="ib app" aria-label="Microsoft 365"><svg width="28" height="30" viewBox="0 0 28 30"><defs><linearGradient id="g5" x2="0" y2="1"><stop stop-color="#a9b8f5"/><stop offset="1" stop-color="#5a4fc8"/></linearGradient></defs><path fill="url(#g5)" d="M13 1 3 7Q1 8 1 11v8q0 3 2 4l4 3 7-5-5-3v-6l7-4V2z"/><path fill="#3fb4ee" d="M13 1h3l9 6q2 1 2 4v10l-8-4v-5l-8-4z"/><path fill="#b07fe0" d="M27 20q0 3-3 4l-8 5h-4l-6-4 8-4 5-4z"/></svg></button>
  <button class="ib app" aria-label="PowerPoint"><svg width="30" height="28"><circle cx="16" cy="14" r="13.500" fill="#d35230"/><path fill="#ff8f6b" d="M16 .5A13.500 13.500 0 0 1 29.500 14H16z"/><path fill="#ed6c47" d="M16 .5A13.500 13.500 0 0 0 2.500 14H16z"/><rect y="6" width="16" height="16" rx="1" fill="#c43e1c"/><text x="4" y="18.500" font-size="12" font-weight="700" fill="#fff">P</text></svg></button>
  <button class="ib app" aria-label="Word"><svg width="30" height="28"><path fill="#41a5ee" d="M7 0h22v7H7z"/><path fill="#2b7cd3" d="M7 7h22v7H7z"/><path fill="#185abd" d="M7 14h22v7H7z"/><path fill="#103f91" d="M7 21h22v6H7z"/><rect y="6" width="16" height="16" rx="1" fill="#2257b5"/><text x="2" y="18.500" font-size="12" font-weight="700" fill="#fff">W</text></svg></button>
  <button class="ib app" aria-label="Excel"><svg width="30" height="28"><path fill="#33c481" d="M18 0h11v7H18z"/><path fill="#21a366" d="M7 0h11v7H7zM18 7h11v7H18z"/><path fill="#107c41" d="M7 7h11v14H7zM18 14h11v7H18z"/><path fill="#185c37" d="M7 21h22v6H7z"/><rect y="6" width="16" height="16" rx="1" fill="#107c41"/><text x="4" y="18.500" font-size="12" font-weight="700" fill="#fff">X</text></svg></button>
  <button class="ib app" aria-label="스티커 메모"><svg width="26" height="26"><rect width="26" height="26" rx="1.500" fill="#fddf08"/><path fill="#d99c10" d="M26 13v13H13z"/><path fill="#444" d="M13 13h13L13 26z"/></svg></button>
  <button class="ib app run" aria-label="파일 탐색기"><svg width="30" height="28"><path fill="#d9a01e" d="M0 2a1.500 1.500 0 0 1 1.500-1.500H10L13 4v4H0z"/><path fill="#ffd25e" d="M0 5.500h11L14 3.500h16V27H0z"/><path fill="#1279cc" d="M5 21a2 2 0 0 1 2-2h16a2 2 0 0 1 2 2v6H5z"/><path fill="#0b539a" d="M9 22.500h12V24H9z"/></svg></button>
  <button class="ib app" aria-label="시계"><svg width="30" height="30"><path fill="#6c747d" d="M0 30V14a15 15 0 0 1 30 0v16z"/><path fill="#444" d="M24 2l3-2 3 3-2 3z"/><circle cx="15" cy="15" r="12.500" fill="#eee"/><path fill="none" stroke="#222" stroke-width="2.500" d="M7 11l8 4 6-5"/><path stroke="#d5301e" stroke-width="2" d="M15 16v9"/></svg></button>
  <button class="ib app" aria-label="웨일"><svg width="28" height="29" viewBox="0 0 28 29"><defs><linearGradient id="gh" x2="1" y2="1"><stop stop-color="#18dfb8"/><stop offset="1" stop-color="#0f9fa0"/></linearGradient></defs><circle cx="14.500" cy="14" r="13.500" fill="#1c2a80"/><path fill="url(#gh)" d="M1 12c4 2 8 6 12 2 3-3 7-4 11-4l3.500 4A13.500 13.500 0 0 1 14 28H1l4-4C1 20 0 15 1 12z"/><path fill="#dcefee" d="M26 7c4 8 1 19-12 21 6-5 4-14 12-21z"/><circle cx="17" cy="16" r="1" fill="#123"/></svg></button>
  <button class="ib app" aria-label="카카오톡"><svg width="30" height="30"><rect width="30" height="30" rx="4" fill="#fae100"/><ellipse cx="15" cy="14" rx="11.500" ry="9" fill="#3b1e1e"/><path fill="#3b1e1e" d="M8 20h6l-5 6z"/><text x="15" y="17" font-size="8" font-weight="700" text-anchor="middle" fill="#fae100">TALK</text></svg></button>
  <button class="ib app" aria-label="Samsung Update"><svg width="30" height="30"><rect width="30" height="30" rx="10" fill="#0fa08d"/><circle cx="15" cy="15" r="10.500" fill="none" stroke="#4df0d0" stroke-width="2" stroke-dasharray="28 5"/><path fill="none" stroke="#fff" stroke-width="2.300" d="M15 10a5 5 0 1 1-5 5"/><path fill="#fff" d="M7 16l4-4 3 4z"/></svg></button>
  <button class="ib app" aria-label="Photoshop"><span class="adobe ps">Ps</span></button>
  <button class="ib app" aria-label="Illustrator"><span class="adobe ai">Ai</span></button>
  <button class="ib app run" aria-label="Chrome"><svg width="36" height="36" viewBox="0 0 36 36" overflow="visible"><circle cx="18" cy="18" r="15" fill="#e33b2e"/><path fill="#219a4b" d="M5 10.500A15 15 0 0 0 18 33l6-11-12-1z"/><path fill="#fcc21b" d="M18 33A15 15 0 0 0 31 10.500H18l6 11z"/><circle cx="18" cy="18" r="7" fill="#3b7ded" stroke="#fff" stroke-width="1.800"/><circle cx="29" cy="7" r="10" fill="#2a8a57"/><path fill="#f0a429" d="M23 4l3 1 2-3 2 2 2-3 2 2v10h-2l-1-5h-3l-1 5h-2V8z"/></svg></button>
  <button class="ib app run active" aria-label="Animate"><span class="adobe an">An</span></button>

  <div class="tray d-flex align-items-center ms-auto">
    <button class="ib me-1" style="width:40px" aria-label="숨겨진 아이콘"><svg width="14" height="9" fill="none" stroke="#fff" stroke-width="2"><path d="M1 7.500l6-6 6 6"/></svg></button>
    <button class="ib" style="width:30px" aria-label="Bluetooth"><svg width="16" height="20"><rect width="16" height="20" rx="7" fill="#0a7ff0"/><path fill="none" stroke="#fff" stroke-width="1.200" d="M4 6.500l8 7-4 3.500V3l4 3.500-8 7"/></svg></button>
    <button class="ib ime" aria-label="가">가</button>
    <button class="ib ime" aria-label="한">한</button>
    <button class="ib ms-2" style="width:30px" aria-label="Wi-Fi"><svg width="21" height="16" fill="none" stroke="#fff" stroke-width="1.500"><path d="M1 6c5-6 14-6 19 0M4 9c4-4 9-4 13 0M7 12c2-2 5-2 7 0"/><circle cx="10.500" cy="13.500" r="1.500" fill="#fff"/></svg></button>
    <button class="ib" style="width:30px" aria-label="볼륨"><svg width="20" height="17" fill="none" stroke="#fff" stroke-width="1.400"><path d="M1 6h3.500L9 2v13l-4.500-4H1zM11.500 6c1.500 1.500 1.500 3.500 0 5M14 4c3 2.500 3 6.500 0 9"/><path stroke="#777" d="M16.500 2c4 4 4 9 0 13"/></svg></button>
    <button class="ib" style="width:30px" aria-label="배터리"><svg width="21" height="14" fill="none" stroke="#fff" stroke-width="1.400"><rect x="1" y="1" width="16" height="12" rx="3"/><path fill="#fff" stroke="none" d="M3 3h6v8H3zM18 5h2.500v4H18z"/></svg></button>
    <div class="clock">오전 10:19<br>2024-08-31</div>
    <button class="ib" style="width:38px" aria-label="알림"><svg width="17" height="19"><path fill="#7fe3ff" d="M8.500 0C4 0 2 3 2 7v4L0 15.500h17L15 11V7c0-4-2-7-6.500-7zM5.500 17h6a3 3 0 0 1-6 0z"/></svg></button>
    <button class="ib ms-2" aria-label="Copilot"><svg width="30" height="30"><defs><linearGradient id="gc" x2="0" y2="1"><stop stop-color="#1b8ae8"/><stop offset=".5" stop-color="#26a7b5"/><stop offset="1" stop-color="#d9d334"/></linearGradient><linearGradient id="gd" x2="0" y2="1"><stop stop-color="#b04fe0"/><stop offset="1" stop-color="#f0807a"/></linearGradient></defs><path fill="url(#gc)" d="M7 2c1-1 2-2 4-2h8c2 0 3 2 3 5l-4 1-4 12H3c-3 0-3-2-3-4z"/><path fill="url(#gd)" d="M18 8h7c3 0 4 2 3 5l-2 7H14z"/><rect x="6" y="19" width="24" height="10" rx="2" fill="#ffc20e"/><text x="18" y="27.300" text-anchor="middle" font-size="9" font-weight="700" fill="#111">PRE</text></svg></button>
  </div>
</footer>

<script>
// Ten-frame blocks for the ruler and the empty cells; 20 frames make one second.
const ruler=document.getElementById('ruler'),cells=document.getElementById('cells');
const blocks=Math.floor((ruler.clientWidth-70)/175);
let rulerHtml='',cellHtml='';
for(let i=0;i<blocks;i++){
  const f=5+i*10;
  rulerHtml+='<div class="block10 d-flex">'+[f,f+5].map(n=>`<div class="ticks five">${n%20===0?`<span class="sec">${n/20}s</span>`:''}<span class="num">${n}</span></div>`).join('')+'</div>';
  if(f>=25)cellHtml+='<div class="block10 d-flex"><div class="empty5"></div><div class="empty5"></div></div>';
}
ruler.insertAdjacentHTML('beforeend',rulerHtml);
cells.insertAdjacentHTML('beforeend',cellHtml);
</script>
</body>
</html>
